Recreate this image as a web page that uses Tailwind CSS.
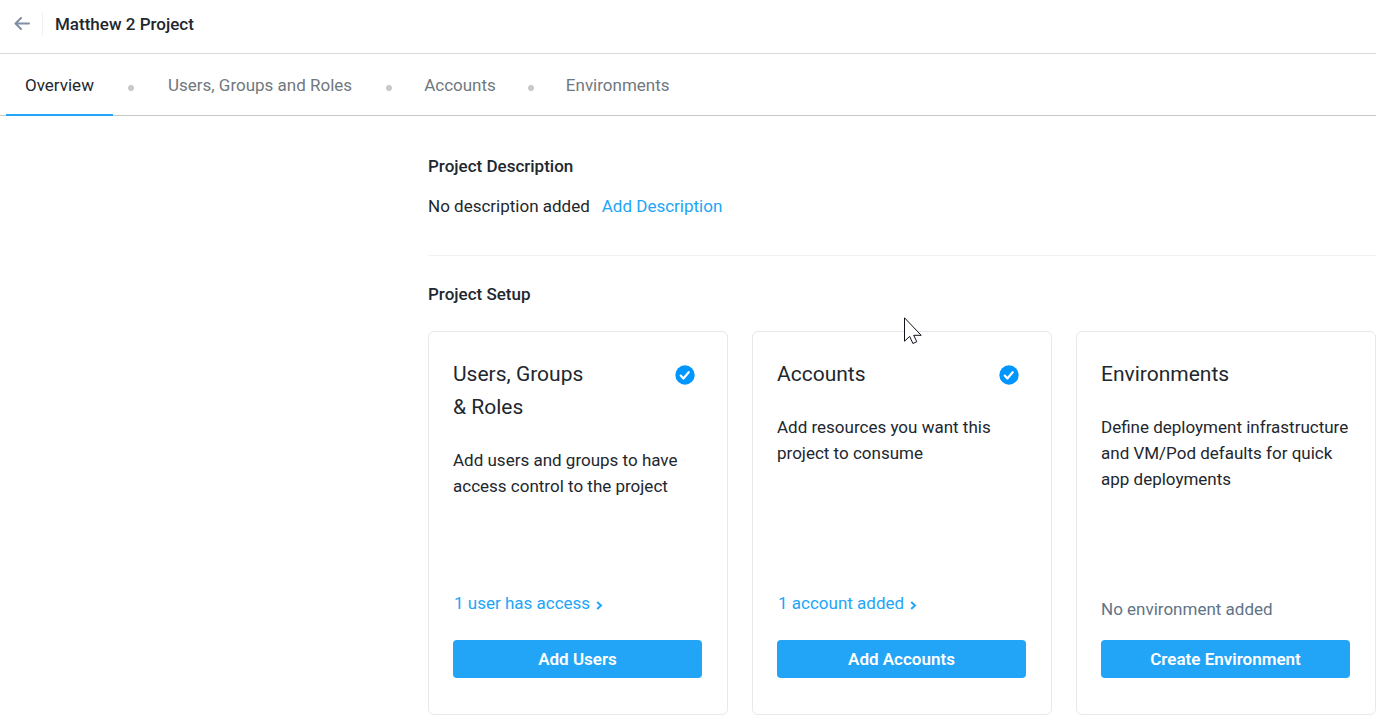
<!DOCTYPE html>
<html lang="en">
<head>
<meta charset="utf-8">
<meta name="viewport" content="width=device-width, initial-scale=1">
<title>Matthew 2 Project</title>
<script src="https://cdn.jsdelivr.net/npm/@tailwindcss/browser@4"></script>
</head>
<body class="bg-white font-['Roboto','Liberation_Sans',sans-serif] text-[17px] leading-[26px] text-[#22272e]">
<header class="flex h-[54px] items-center border-b border-[#d9dadb] pb-[6px]">
  <button type="button" aria-label="Back" class="ml-[14px] flex size-4 items-center justify-center text-[#8091a5]">
    <svg class="h-[14px] w-4" viewBox="0 0 16 14" fill="none" stroke="currentColor" stroke-width="2" stroke-linecap="round" stroke-linejoin="round"><path d="M15 6.5H1.8M7 1 1.5 6.5 7 12"/></svg>
  </button>
  <div class="mx-3 h-[22px] w-px bg-[#eff0f2]"></div>
  <h1 class="font-medium">Matthew 2 Project</h1>
</header>

<nav aria-label="Project sections" class="flex h-[62px] border-b border-[#c6c8ca] pl-[6px] text-[#6f787e]">
  <a href="#overview" aria-current="page" class="-mb-px flex items-center border-b-2 border-[#22a5f7] px-[19px] pt-px text-[#22272e]">Overview</a>
  <span class="mx-[15px] mt-[31px] size-[6px] rounded-full bg-[#c8c8c8]"></span>
  <a href="#users" class="flex items-center px-[19px]">Users, Groups and Roles</a>
  <span class="mx-[15px] mt-[31px] size-[6px] rounded-full bg-[#c8c8c8]"></span>
  <a href="#accounts" class="flex items-center px-[17px]">Accounts</a>
  <span class="mx-[15px] mt-[31px] size-[6px] rounded-full bg-[#c8c8c8]"></span>
  <a href="#environments" class="flex items-center px-[17px]">Environments</a>
</nav>

<main class="ml-[428px] pt-[37px]">
  <section class="border-b border-[#f1f2f3] pb-9">
    <h2 class="font-medium">Project Description</h2>
    <p class="mt-[14px] flex gap-3">No description added <a href="#add-description" class="text-[#22a5f7]">Add Description</a></p>
  </section>
  <section class="pt-[25px]">
    <h2 class="font-medium">Project Setup</h2>
    <div class="mt-6 grid grid-cols-3 gap-6">
      <article class="flex min-h-[384px] flex-col rounded-md border border-[#e6e8ea] pt-[26px] pr-[25px] pb-9 pl-6">
        <div class="flex items-start justify-between">
          <h3 class="text-[21px] leading-[33px] font-normal">Users, Groups<br>&amp; Roles</h3>
          <svg class="mt-[7px] mr-[7px] size-5" viewBox="0 0 20 20" role="img" aria-label="Complete"><circle cx="10" cy="10" r="9.7" fill="#0096ff"/><path d="m5.7 10.6 2.7 2.9 5.3-6.3" fill="none" stroke="#fff" stroke-width="2.2" stroke-linecap="round" stroke-linejoin="round"/></svg>
        </div>
        <p class="mt-[23px]">Add users and groups to have access control to the project</p>
        <a href="#user-list" class="mt-auto mb-6 flex items-center gap-[6px] pl-px text-[#22a5f7]">1 user has access <svg class="mt-1 h-[9px] w-[7px]" viewBox="0 0 7 9" fill="none" stroke="currentColor" stroke-width="2"><path d="m1.2 1 3.8 3.5L1.2 8"/></svg></a>
        <button type="button" class="h-[38px] rounded bg-[#22a5f7] font-semibold text-white">Add Users</button>
      </article>
      <article class="flex min-h-[384px] flex-col rounded-md border border-[#e6e8ea] pt-[26px] pr-[25px] pb-9 pl-6">
        <div class="flex items-start justify-between">
          <h3 class="text-[21px] leading-[33px] font-normal">Accounts</h3>
          <svg class="mt-[7px] mr-[7px] size-5" viewBox="0 0 20 20" role="img" aria-label="Complete"><circle cx="10" cy="10" r="9.7" fill="#0096ff"/><path d="m5.7 10.6 2.7 2.9 5.3-6.3" fill="none" stroke="#fff" stroke-width="2.2" stroke-linecap="round" stroke-linejoin="round"/></svg>
        </div>
        <p class="mt-[23px]">Add resources you want this project to consume</p>
        <a href="#account-list" class="mt-auto mb-6 flex items-center gap-[6px] pl-px text-[#22a5f7]">1 account added <svg class="mt-1 h-[9px] w-[7px]" viewBox="0 0 7 9" fill="none" stroke="currentColor" stroke-width="2"><path d="m1.2 1 3.8 3.5L1.2 8"/></svg></a>
        <button type="button" class="h-[38px] rounded bg-[#22a5f7] font-semibold text-white">Add Accounts</button>
      </article>
      <article class="flex min-h-[384px] flex-col rounded-md border border-[#e6e8ea] pt-[26px] pr-[25px] pb-9 pl-6">
        <h3 class="text-[21px] leading-[33px] font-normal">Environments</h3>
        <p class="mt-[23px]">Define deployment infrastructure and VM/Pod defaults for quick app deployments</p>
        <p class="mt-auto mb-[18px] text-[#627386]">No environment added</p>
        <button type="button" class="h-[38px] rounded bg-[#22a5f7] font-semibold text-white">Create Environment</button>
      </article>
    </div>
  </section>
</main>

<svg class="pointer-events-none absolute top-[317px] left-[904px] h-[28px] w-[19px]" viewBox="0 0 19 28" aria-hidden="true"><path d="M.5.8v23.4l5.2-4.8 3.2 7.1 3.9-1.8-3.1-6.4h7.5z" fill="#fff" stroke="#12121c" stroke-width="1"/></svg>
</body>
</html>
